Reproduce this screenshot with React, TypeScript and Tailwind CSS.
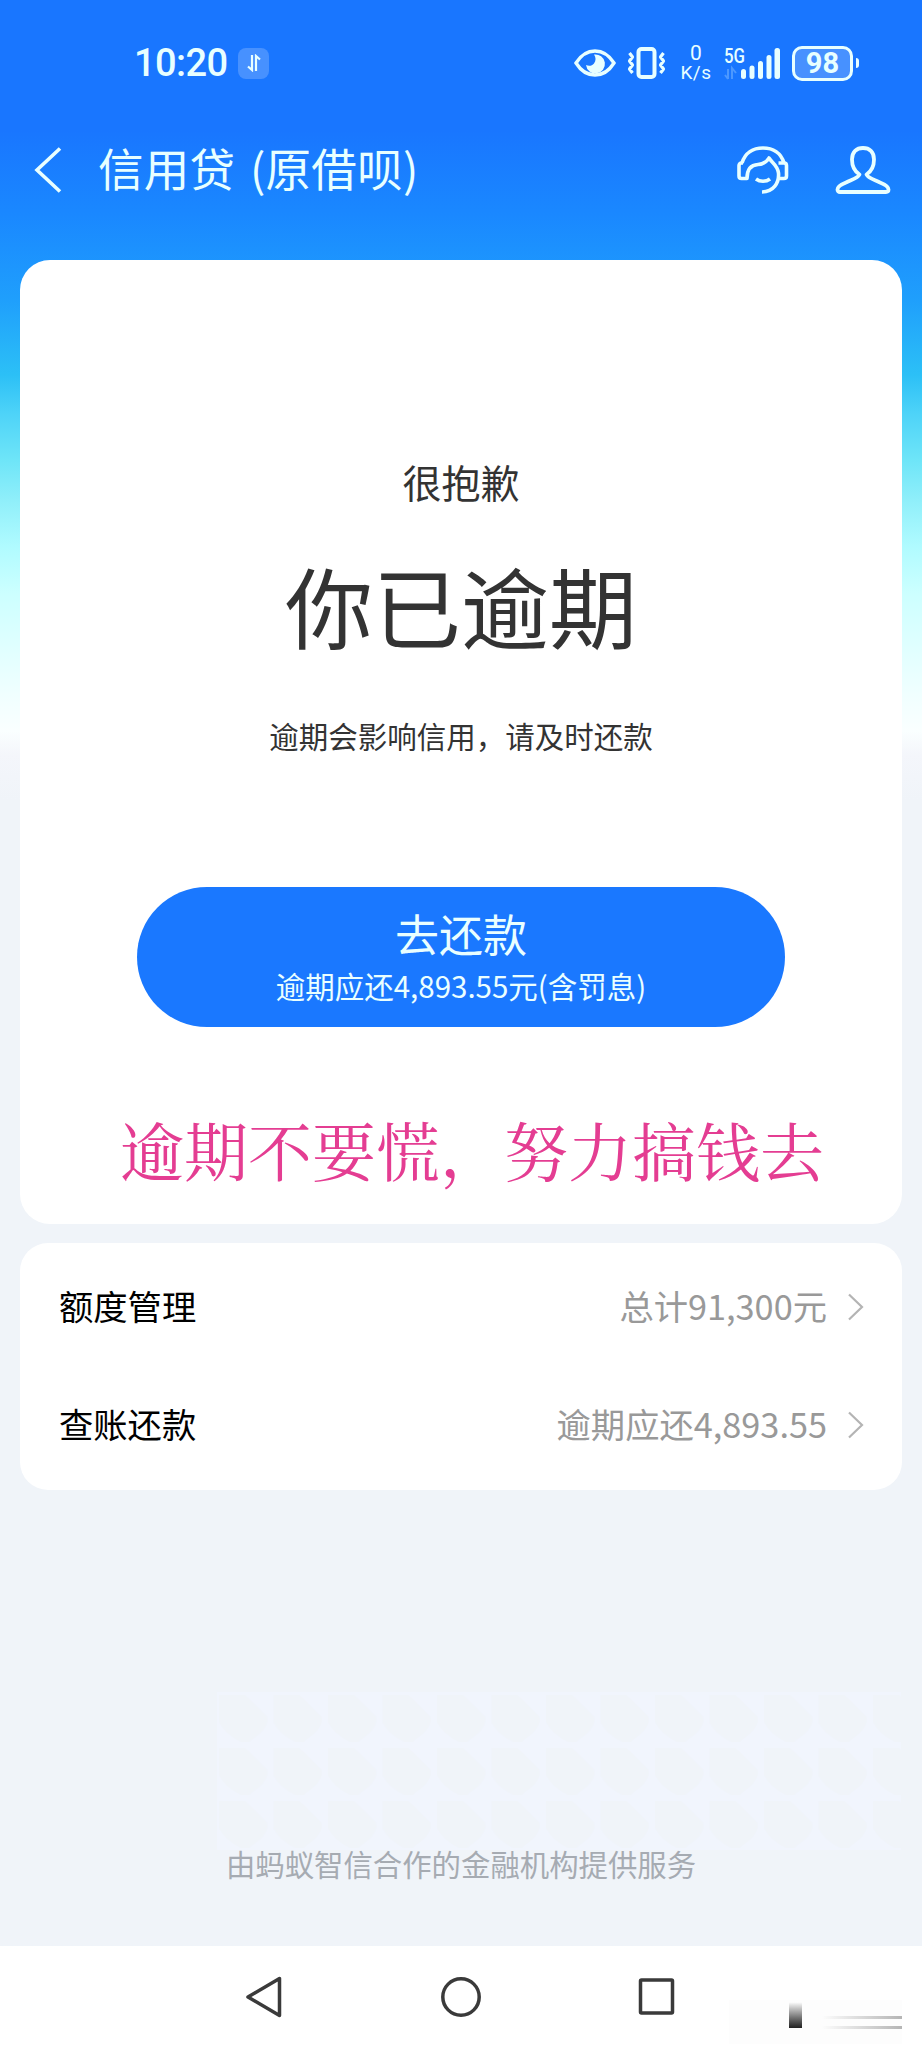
import React from 'react';

interface MenuItem {
  label: string;
  value: string;
}

const menuItems: MenuItem[] = [
  { label: '额度管理', value: '总计91,300元' },
  { label: '查账还款', value: '逾期应还4,893.55' },
];

const StatusBar: React.FC = () => (
  <div className="flex h-[126px] items-center pl-[134px] pr-[63px] text-[#e8ffff]">
    <span className="font-['Roboto',sans-serif] text-[38px] font-medium leading-none tracking-[-0.6px]">
      10:20
    </span>
    <span className="ml-[11px] flex h-[31px] w-[31px] items-center justify-center rounded-lg bg-white/20">
      <svg width="14" height="18" viewBox="0 0 14 18" fill="none" stroke="currentColor" strokeWidth="2.2">
        <path d="M5 1v15L1 12.5M9 17V2l4 3.5" />
      </svg>
    </span>

    <div className="ml-auto flex items-center">
      {/* Eye comfort */}
      <svg width="42" height="30" viewBox="0 0 42 30" fill="none">
        <path
          d="M2 15C7 7 13.500 3 21 3s14 4 19 12c-5 8-11.500 12-19 12S7 23 2 15Z"
          stroke="currentColor"
          strokeWidth="3.400"
        />
        <path d="M20 6.500A9.500 9.500 0 1 1 12 17c3 1.500 6 .8 8-1.500 2.200-3 2-6 0-9Z" fill="currentColor" />
      </svg>

      {/* Vibrate */}
      <svg className="ml-[11px]" width="39" height="34" viewBox="0 0 39 34" fill="none" stroke="currentColor">
        <rect x="11.500" y="3" width="16" height="28" rx="3" strokeWidth="4" />
        <path
          d="M2.500 7l3 4-3 4 3 4-3 4 3 4M36.500 7l-3 4 3 4-3 4 3 4-3 4"
          strokeWidth="3.200"
          strokeLinejoin="round"
        />
      </svg>

      <span className="ml-[14px] flex w-[32px] flex-col items-center font-['Roboto',sans-serif] text-[20px] leading-[20px]">
        <span className="h-[20px] text-[21px]">0</span>
        <span className="h-[20px] text-[19px] tracking-[0.5px]">K/s</span>
      </span>

      {/* Signal */}
      <svg className="ml-[12px]" width="58" height="36" viewBox="0 0 58 36" fill="currentColor">
        <text x="0" y="18" fontFamily="Roboto, sans-serif" fontSize="20.500" fontWeight="500" textLength="21" lengthAdjust="spacingAndGlyphs">
          5G
        </text>
        <path d="M4 24v10M1 30l3 4M8 34V23l4 5" stroke="currentColor" strokeWidth="2" fill="none" opacity="0.25" />
        <rect x="17" y="24" width="5" height="10" rx="2.500" />
        <rect x="25.500" y="20.500" width="5" height="13.500" rx="2.500" />
        <rect x="34" y="16" width="5" height="18" rx="2.500" />
        <rect x="42.500" y="10" width="5" height="24" rx="2.500" />
        <rect x="50.500" y="3" width="5.500" height="31" rx="2.500" />
      </svg>

      {/* Battery */}
      <span className="ml-[10px] flex h-[35px] w-[61px] items-center justify-center rounded-[10px] border-[3px] border-current bg-white/20 font-['Roboto',sans-serif] text-[29px] font-bold leading-none">
        98
      </span>
      <span className="ml-[3px] h-[10px] w-[3px] rounded-r-sm bg-current" />
    </div>
  </div>
);

const TitleBar: React.FC = () => (
  <div className="flex h-[88px] items-center pl-[34px] pr-[31px] text-[#e8ffff]">
    <svg width="28" height="48" viewBox="0 0 28 48" fill="none" stroke="currentColor" strokeWidth="3.600">
      <path d="M26 2.500 3 24l23 21.500" />
    </svg>
    <h1 className="mb-[5px] ml-[36px] whitespace-pre text-[45.500px] font-normal leading-none tracking-[0.3px] [word-spacing:4px]">
      信用贷 (原借呗)
    </h1>

    {/* Customer service */}
    <svg
      className="ml-auto"
      width="54"
      height="50"
      viewBox="0 0 54 50"
      fill="none"
      stroke="currentColor"
      strokeWidth="3.600"
      strokeLinejoin="round"
    >
      <path d="M7 18C10 8 18 3 28 3s18 5 21 15" />
      <path d="M8 18H6.500C5 18 4 19 4 20.500V31c0 1.500 1 2.500 2.500 2.500H12c0-9 3.500-13.500 11-14 5-.3 8.500-2 11-6.500C37 18 42.500 20 43.500 28c.8 10-5 18.500-16.500 19" />
      <path d="M43.500 18H49c1.500 0 2.500 1 2.500 2.500V31c0 1.500-1 2.500-2.500 2.500H44" />
      <path d="M21 34c4 3 10 3 14 0" />
    </svg>

    {/* Profile */}
    <svg
      className="ml-[46px]"
      width="56"
      height="50"
      viewBox="0 0 56 50"
      fill="none"
      stroke="currentColor"
      strokeWidth="3.800"
      strokeLinejoin="round"
    >
      <path d="M24.500 29.500C19 26 17 21 17 14.500 17 7 21.500 3 28 3s11 4 11 11.500c0 6.500-2 11.500-7.500 15 2 4 7.500 5 13.500 8 5 2 8.500 4 8.500 7 0 1.500-1 2.500-2.500 2.500h-46C3.500 47 2.500 46 2.500 44.500c0-3 3.500-5 8.500-7 6-3 11.500-4 13.500-8Z" />
    </svg>
  </div>
);

const OverdueCard: React.FC = () => (
  <section className="flex h-[964px] flex-col items-center rounded-[30px] bg-white text-[#333333]">
    <p className="mt-[201px] text-[39px] leading-[40px]">很抱歉</p>
    <h2 className="mt-[58px] text-[88px] font-normal leading-[90px]">你已逾期</h2>
    <p className="mt-[66px] text-[29.500px] leading-[40px]">逾期会影响信用，请及时还款</p>
    <button className="mt-[132px] flex h-[140px] w-[648px] flex-col items-center rounded-full bg-[#1a78ff] pt-[21px] text-[#eaffff]">
      <span className="text-[44px] leading-[50px]">去还款</span>
      <span className="mt-[7px] text-[29.500px] leading-[40px]">逾期应还4,893.55元(含罚息)</span>
    </button>
    <p className="ml-[22px] mt-[88px] whitespace-nowrap font-['Noto_Serif_CJK_SC','Noto_Sans_CJK_SC',serif] text-[64px] font-normal leading-[66px] text-[#e43d92]">
      逾期不要慌，努力搞钱去
    </p>
  </section>
);

const MenuCard: React.FC = () => (
  <section className="mt-[19px] h-[247px] rounded-[28px] bg-white pt-[5px]">
    {menuItems.map((item) => (
      <div key={item.label} className="flex h-[118px] items-center pl-[39px] pr-[38px] text-[34.300px]">
        <span className="mb-[3px] text-black">{item.label}</span>
        <span className="mb-[3px] ml-auto text-[#999999]">{item.value}</span>
        <svg className="ml-[20px]" width="17" height="28" viewBox="0 0 17 28" fill="none" stroke="#b4b4b4" strokeWidth="2.200">
          <path d="M2 1.500 15 14 2 26.500" />
        </svg>
      </div>
    ))}
  </section>
);

// Faint tiled texture above the footer note
const Texture: React.FC = () => (
  <svg className="absolute left-[217px] top-[1692px]" width="684" height="158" fill="none">
    <defs>
      <pattern id="leaf" width="54.500" height="53" patternUnits="userSpaceOnUse">
        <rect width="54.500" height="53" fill="#f1f5fd" />
        <path d="M2 3h26l22 22q2 8-8 17l-10 8h-8Q8 42 2 30Z" fill="#f0f4f9" />
      </pattern>
    </defs>
    <rect width="684" height="158" fill="url(#leaf)" />
  </svg>
);

const SystemNav: React.FC = () => (
  <nav className="relative flex h-[102px] items-center bg-white pl-[244px] text-[#3a3a3a]">
    <svg width="40" height="44" viewBox="0 0 40 44" fill="none" stroke="currentColor" strokeWidth="3.500" strokeLinejoin="round">
      <path d="M35.500 3.500v37L4 22Z" />
    </svg>
    <svg className="ml-[155px]" width="44" height="44" viewBox="0 0 44 44" fill="none" stroke="currentColor" strokeWidth="3.500">
      <circle cx="22" cy="22" r="18.200" />
    </svg>
    <svg className="ml-[154px]" width="40" height="44" viewBox="0 0 40 44" fill="none" stroke="currentColor" strokeWidth="3.500">
      <rect x="3.500" y="5" width="32" height="33" rx="1" />
    </svg>
    <div className="absolute left-[729px] top-[54px] h-[44px] w-[173px] bg-[#fdfdfd]">
      <div className="absolute left-[60px] top-[2px] h-[26px] w-[13px] bg-linear-to-b from-white via-[#8a8a8a] to-[#222222]" />
      <div className="absolute right-0 top-[16px] h-[3px] w-[80px] bg-linear-to-r from-transparent to-[#b5b5b5]" />
      <div className="absolute right-0 top-[26px] h-[3px] w-[80px] bg-linear-to-r from-transparent to-[#b5b5b5]" />
    </div>
  </nav>
);

export default function App() {
  return (
    <div
      lang="zh-CN"
      className="relative flex h-[2048px] w-[922px] flex-col overflow-hidden bg-[#f0f4f9] bg-[linear-gradient(180deg,#1976ff_0px,#1976ff_130px,#1a88ff_215px,#1f9ffc_300px,#2cc0f6_375px,#4ed3f8_414px,#6ee5f8_460px,#90effa_501px,#b0fbff_547px,#ccffff_593px,#e0ffff_648px,#f0ffff_694px,#faffff_731px,#f4f6fb_755px,#f0f4f9_800px)] font-['Noto_Sans_CJK_SC',sans-serif]"
    >
      <Texture />
      <StatusBar />
      <TitleBar />
      <main className="flex flex-1 flex-col px-[20px] pt-[46px]">
        <OverdueCard />
        <MenuCard />
        <p className="mb-[63px] mt-auto text-center text-[29.400px] leading-[40px] text-[#a6abb2]">
          由蚂蚁智信合作的金融机构提供服务
        </p>
      </main>
      <SystemNav />
    </div>
  );
}
